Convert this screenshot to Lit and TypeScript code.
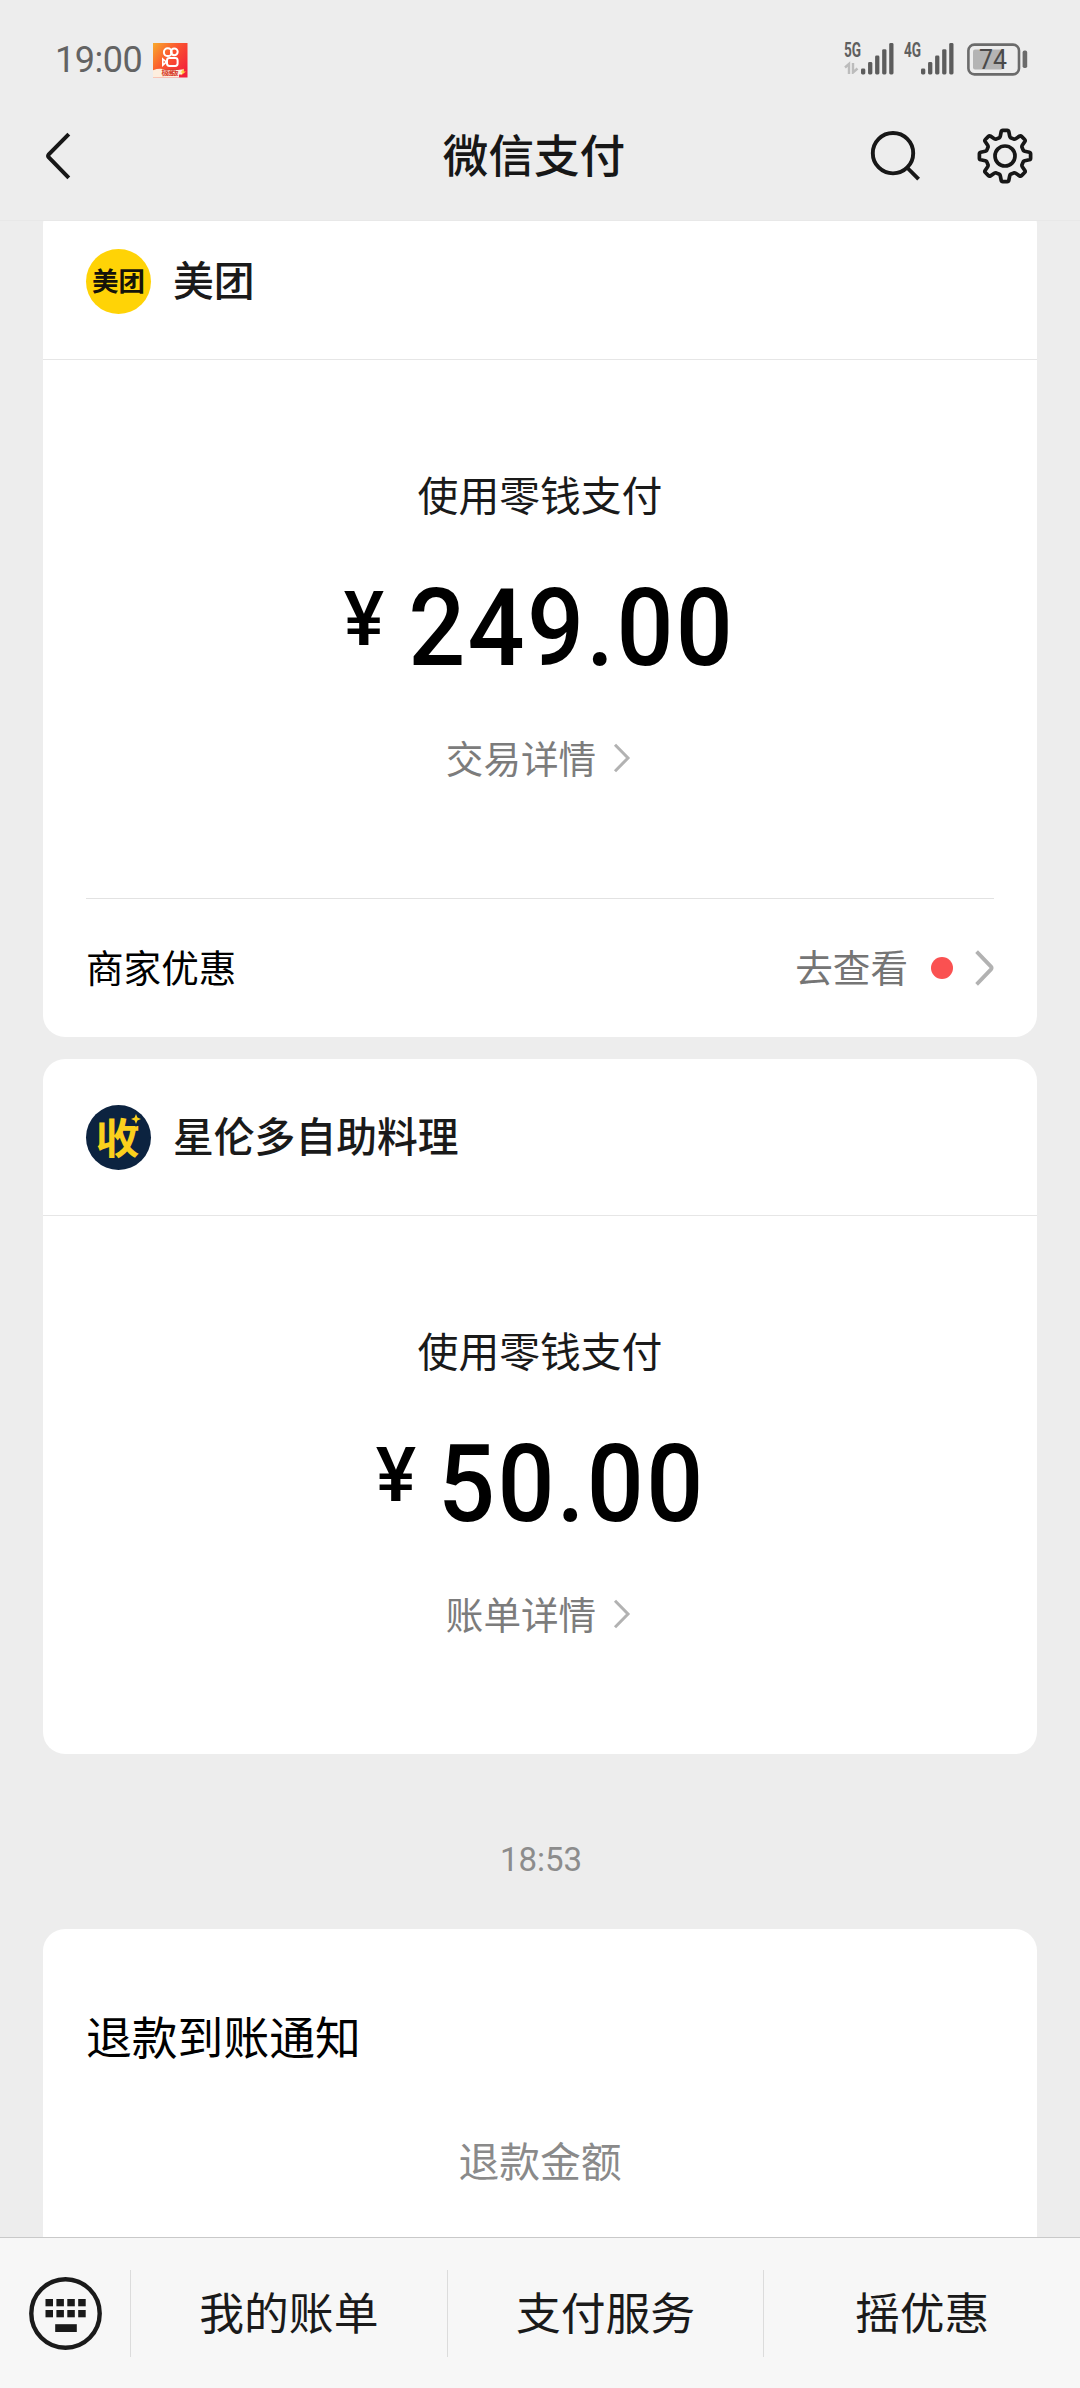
import { LitElement, html, css, svg, nothing } from "lit";
import { customElement, property } from "lit/decorators.js";

interface Payment {
  merchant: string;
  logo: "meituan" | "shou";
  amount: string;
  detail: string;
  offer?: string;
}

const PAYMENTS: Payment[] = [
  { merchant: "美团", logo: "meituan", amount: "249.00", detail: "交易详情", offer: "商家优惠" },
  { merchant: "星伦多自助料理", logo: "shou", amount: "50.00", detail: "账单详情" },
];

const MENU = ["我的账单", "支付服务", "摇优惠"];

/* Outline of an eight-toothed cog centred on the origin. */
function cogPath(): string {
  const parts: string[] = [];
  for (let i = 0; i < 8; i++) {
    const a = (i * Math.PI) / 4;
    const p = (x: number, y: number) =>
      `${(x * Math.cos(a) - y * Math.sin(a)).toFixed(2)} ${(x * Math.sin(a) + y * Math.cos(a)).toFixed(2)}`;
    parts.push(
      `${i === 0 ? "M" : "L"}${p(-5.6, -18.3)}`,
      `Q${p(-4.9, -18.8)} ${p(-4.7, -19.8)}`,
      `L${p(-3.8, -24.3)}`,
      `Q${p(-3.5, -25.6)} ${p(-2.2, -25.6)}`,
      `L${p(2.2, -25.6)}`,
      `Q${p(3.5, -25.6)} ${p(3.8, -24.3)}`,
      `L${p(4.7, -19.8)}`,
      `Q${p(4.9, -18.8)} ${p(5.6, -18.3)}`,
    );
  }
  return parts.join("") + "Z";
}

@customElement("signal-bars")
class SignalBars extends LitElement {
  @property() label = "";
  @property({ type: Boolean }) data = false;

  static styles = css`
    :host { display: flex; height: 32px; }
    .left { width: 17px; display: flex; flex-direction: column; }
    .label {
      font: 700 20px/19px "Roboto", sans-serif;
      height: 20px;
      transform: scaleX(0.68);
      transform-origin: left top;
      margin-top: -2px;
      color: #5f5f5f;
    }
    svg { display: block; }
  `;

  render() {
    const tops = [25.5, 19, 12.5, 6.2, 0];
    return html`
      <div class="left">
        <span class="label">${this.label}</span>
        ${this.data
          ? html`<svg width="17" height="13" viewBox="0 0 17 13" fill="none" stroke="#bcbcbc" stroke-width="2.4">
              <path d="M1 6.5 5 3V13M9 2V11.5L13.5 7.5" />
            </svg>`
          : nothing}
      </div>
      <svg width="33" height="32" viewBox="0 0 33 32">
        ${tops.map((t, i) => svg`<rect x=${i * 7.05} y=${t} width="4.3" height=${31.5 - t} rx="1.4" fill="#5c5c5c" />`)}
      </svg>
    `;
  }
}

@customElement("status-bar")
class StatusBar extends LitElement {
  static styles = css`
    :host { display: flex; align-items: flex-start; height: 93px; padding: 43px 52px 0 55px; box-sizing: border-box; }
    .time { font: 400 36px/34px "Roboto", sans-serif; color: #636363; letter-spacing: -0.5px; width: 98px; }
    .spacer { flex: 1; }
    .second { margin-left: 10px; }
    .battery { margin-left: 13px; }
    svg { display: block; }
    .level { font: 400 27px "Roboto", sans-serif; fill: #4a4a4a; }
    .strip { font: 700 7px "Noto Sans CJK SC", sans-serif; fill: #d8402e; }
  `;

  render() {
    return html`
      <span class="time">19:00</span>
      <svg width="35" height="35" viewBox="0 0 35 35">
        <defs>
          <linearGradient id="g" x1="0" y1="0" x2="1" y2="0.75">
            <stop offset="0" stop-color="#f8ab2c" />
            <stop offset="0.45" stop-color="#fb5a2e" />
            <stop offset="1" stop-color="#f3203c" />
          </linearGradient>
        </defs>
        <rect width="34.5" height="34.5" fill="url(#g)" />
        <g fill="none" stroke="#fff" stroke-width="2">
          <circle cx="14.8" cy="9.2" r="3.9" />
          <circle cx="21.3" cy="8.8" r="3.4" />
          <rect x="14" y="15" width="10.6" height="8" rx="2.4" />
          <path d="M9.8 16 13.4 19 9.8 22.2Z" stroke-width="1.6" />
        </g>
        <path d="M0 27.2Q6 25 12 26.4T31 26.2L29 31.5H26V34.5H0Z" fill="#fdeede" />
        <path d="M31 25.5 27.5 29.5H29.6L27.8 32.6 33 28.6H30.6Z" fill="#ffd23c" />
        <text class="strip" x="8.6" y="32.4" textLength="17">极速版</text>
      </svg>
      <div class="spacer"></div>
      <signal-bars label="5G" data></signal-bars>
      <signal-bars class="second" label="4G"></signal-bars>
      <svg class="battery" width="61" height="33" viewBox="0 0 61 33">
        <rect x="1.4" y="1.6" width="50.6" height="29.8" rx="6" fill="none" stroke="#6b6b6b" stroke-width="2.6" />
        <rect x="6" y="6.4" width="30" height="20" rx="2" fill="#b4b4b4" />
        <rect x="55.6" y="7.6" width="4.6" height="17.4" rx="1.8" fill="#6b6b6b" />
        <text class="level" x="12" y="25.6" textLength="28" lengthAdjust="spacingAndGlyphs">74</text>
      </svg>
    `;
  }
}

@customElement("nav-bar")
class NavBar extends LitElement {
  static styles = css`
    :host {
      display: grid;
      grid-template-columns: 1fr auto 1fr;
      align-items: center;
      height: 125px;
      padding: 0 46px;
      box-sizing: border-box;
    }
    .title {
      font: 500 45.6px/60px "Noto Sans CJK SC", sans-serif;
      color: #171717;
      margin: -6px 12px 0 0;
    }
    .actions { display: flex; justify-content: flex-end; align-items: center; gap: 55px; }
    svg { display: block; fill: none; stroke: #171717; }
  `;

  render() {
    return html`
      <svg width="26" height="50" viewBox="0 0 26 50" stroke-width="4">
        <path d="M22.8 3.2 2.6 23.6Q1.6 25 2.6 26.2L22.8 46.8" />
      </svg>
      <span class="title">微信支付</span>
      <div class="actions">
        <svg width="52" height="52" viewBox="0 0 52 52" stroke-width="3.9">
          <circle cx="24" cy="23.2" r="20.2" />
          <path d="M38 37.5 49.6 49.2" />
        </svg>
        <svg width="58" height="58" viewBox="-29 -29 58 58" stroke-width="3.7" stroke-linejoin="round">
          <path d=${cogPath()} />
          <circle r="10" />
        </svg>
      </div>
    `;
  }
}

@customElement("merchant-logo")
class MerchantLogo extends LitElement {
  @property() kind = "";

  static styles = css`
    svg { display: block; overflow: visible; }
    .meituan { font: 700 26px "Noto Sans CJK SC", sans-serif; fill: #15130a; }
    .shou { font: 700 42px "Noto Sans CJK SC", sans-serif; fill: #fbd01c; }
  `;

  render() {
    return this.kind === "meituan"
      ? html`<svg width="65" height="65" viewBox="0 0 65 65">
          <circle cx="32.5" cy="32.5" r="32.5" fill="#ffd306" />
          <text class="meituan" x="6" y="41.5" textLength="53" lengthAdjust="spacingAndGlyphs">美团</text>
        </svg>`
      : html`<svg width="65" height="65" viewBox="0 0 65 65">
          <circle cx="32.5" cy="32.5" r="32.5" fill="#0c2340" />
          <text class="shou" x="9.5" y="48.6" textLength="44" lengthAdjust="spacingAndGlyphs">收</text>
          <path
            d="M50 9 51.4 12.6 55 14 51.4 15.4 50 19 48.6 15.4 45 14 48.6 12.6Z"
            fill="#fbd01c"
            stroke="#0c2340"
            stroke-width="2.4"
            paint-order="stroke"
          />
        </svg>`;
  }
}

@customElement("payment-card")
class PaymentCard extends LitElement {
  @property({ attribute: false }) payment!: Payment;

  static styles = css`
    :host { display: block; background: #fff; border-radius: 22px; font-family: "Noto Sans CJK SC", sans-serif; }
    .head {
      display: flex;
      align-items: center;
      gap: 22px;
      height: 156px;
      padding: 0 43px;
      border-bottom: 1px solid #e6e6e6;
    }
    .name { font-weight: 500; font-size: 40.8px; line-height: 60px; color: #1a1a1a; margin-top: -4px; }
    .body { display: flex; flex-direction: column; align-items: center; padding: 104px 0 111px; }
    .method { font-size: 40.8px; line-height: 60px; color: #1a1a1a; }
    .amount {
      display: flex;
      font-family: "Roboto", sans-serif;
      font-weight: 500;
      color: #000;
      margin-top: 49px;
      height: 110px;
    }
    .yen { font-size: 76px; line-height: 76px; margin: 8px -11px 0 11px; width: 63px; }
    .value { font-size: 108px; line-height: 110px; letter-spacing: 2.4px; transform: scaleX(0.93); }
    .detail {
      display: flex;
      align-items: center;
      gap: 17px;
      margin: 44px 3px 0 0;
      font-size: 37.6px;
      line-height: 60px;
      color: #7c7c7c;
    }
    .foot {
      display: flex;
      align-items: center;
      height: 138px;
      margin: 0 43px;
      border-top: 1px solid #e2e2e2;
      font-size: 37.6px;
      line-height: 60px;
      color: #000;
    }
    .foot span { margin-top: -4px; }
    .go { margin-left: auto; color: #757575; }
    .dot { width: 22px; height: 22px; border-radius: 50%; background: #fa5151; margin: 0 22px 0 23px; }
    svg { display: block; fill: none; stroke: #b2b2b2; }
    .small { margin-top: 2px; }
  `;

  render() {
    const p = this.payment;
    return html`
      <div class="head">
        <merchant-logo kind=${p.logo}></merchant-logo>
        <span class="name">${p.merchant}</span>
      </div>
      <div class="body">
        <span class="method">使用零钱支付</span>
        <div class="amount"><span class="yen">¥</span><span class="value">${p.amount}</span></div>
        <div class="detail">
          <span>${p.detail}</span>
          <svg class="small" width="18" height="30" viewBox="0 0 18 30" stroke-width="3">
            <path d="M2 1.8 15 15 2 28.2" />
          </svg>
        </div>
      </div>
      ${p.offer
        ? html`<div class="foot">
            <span>${p.offer}</span>
            <span class="go">去查看</span>
            <i class="dot"></i>
            <svg width="19" height="36" viewBox="0 0 19 36" stroke-width="3.8">
              <path d="M1.6 1.6 16 16.6Q17.2 18 16 19.4L1.6 34.4" />
            </svg>
          </div>`
        : nothing}
    `;
  }
}

@customElement("menu-bar")
class MenuBar extends LitElement {
  static styles = css`
    :host {
      display: flex;
      align-items: center;
      height: 151px;
      box-sizing: border-box;
      border-top: 1px solid #c9c9c9;
      background: #f7f7f7;
    }
    .keyboard { width: 130px; display: flex; padding-left: 28px; box-sizing: border-box; }
    .item {
      flex: 1;
      height: 87px;
      box-sizing: border-box;
      border-left: 1px solid #dcdcdc;
      text-align: center;
      font: 400 44.8px/82px "Noto Sans CJK SC", sans-serif;
      color: #1a1a1a;
    }
    svg { display: block; }
  `;

  render() {
    return html`
      <div class="keyboard">
        <svg width="75" height="75" viewBox="0 0 75 75" fill="#1a1a1a">
          <circle cx="37.5" cy="37.5" r="34.2" fill="none" stroke="#1a1a1a" stroke-width="4.4" />
          ${[0, 1].map((r) =>
            [0, 1, 2, 3].map(
              (c) => svg`<rect x=${17.5 + c * 10.9} y=${23 + r * 11} width="7.5" height="7.3" />`,
            ),
          )}
          <rect x="27.2" y="48.2" width="21.6" height="7.8" />
        </svg>
      </div>
      ${MENU.map((m) => html`<div class="item">${m}</div>`)}
    `;
  }
}

@customElement("app-root")
class AppRoot extends LitElement {
  static styles = css`
    :host {
      display: flex;
      flex-direction: column;
      width: 1080px;
      height: 2388px;
      overflow: hidden;
      background: #ededed;
      font-family: "Noto Sans CJK SC", sans-serif;
    }
    .header { height: 220px; background: #ededed; }
    .feed {
      flex: 1;
      min-height: 0;
      overflow: hidden;
      box-sizing: border-box;
      border-top: 1px solid #e8e8e8;
      padding: 0 43px;
    }
    .list { display: flex; flex-direction: column; gap: 22px; margin-top: -18px; }
    .time {
      margin-top: 76px;
      text-align: center;
      font: 400 33px/60px "Roboto", sans-serif;
      color: #8c8c8c;
      padding-left: 2px;
    }
    .refund {
      margin-top: 39px;
      height: 400px;
      background: #fff;
      border-radius: 22px;
      padding: 76px 43px 0;
    }
    .refund-title { font-size: 45.8px; line-height: 60px; color: #000; }
    .refund-label { margin-top: 65px; text-align: center; font-size: 40.8px; line-height: 60px; color: #8a8a8a; }
  `;

  render() {
    return html`
      <div class="header">
        <status-bar></status-bar>
        <nav-bar></nav-bar>
      </div>
      <div class="feed">
        <div class="list">
          ${PAYMENTS.map((p) => html`<payment-card .payment=${p}></payment-card>`)}
        </div>
        <div class="time">18:53</div>
        <div class="refund">
          <div class="refund-title">退款到账通知</div>
          <div class="refund-label">退款金额</div>
        </div>
      </div>
      <menu-bar></menu-bar>
    `;
  }
}
